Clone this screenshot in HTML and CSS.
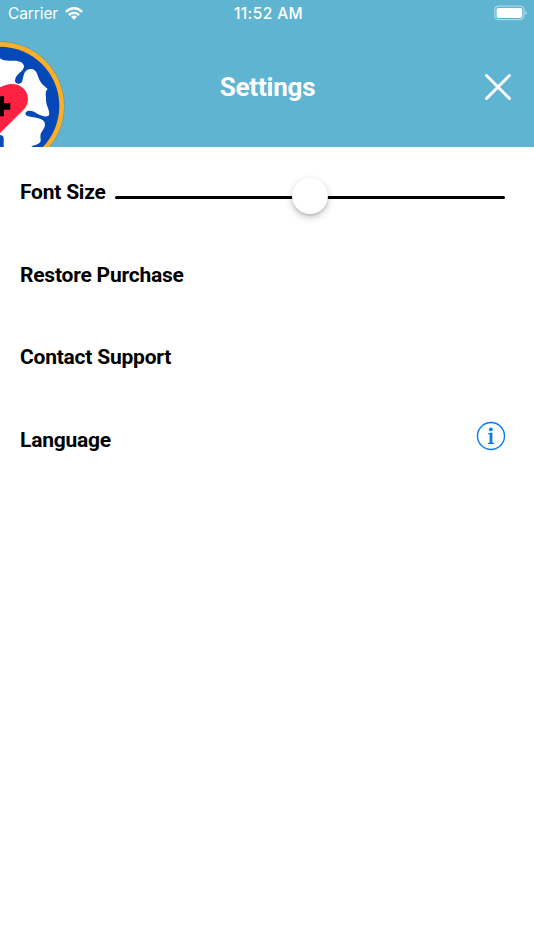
FILE: index.html
```html
<!DOCTYPE html>
<html lang="en">
<head>
<meta charset="utf-8">
<title>Settings</title>
<link rel="stylesheet" href="styles.css">
</head>
<body>
<header class="header">
  <div class="status">
    <div class="carrier"><span>Carrier</span>
      <svg class="wifi" viewBox="0 0 18 13" width="18" height="13"><g fill="none" stroke="#fff" stroke-width="2.5"><path d="M.9 4.9Q9-2.3 17.1 4.9"/><path d="M3.9 8Q9 3.5 14.1 8"/></g><path fill="#fff" d="M6 9.7Q9 7.4 12 9.7L9 12.8Z"/></svg>
    </div>
    <time class="clock">11:52 AM</time>
    <svg class="battery" viewBox="0 0 34 16" width="34" height="16"><rect x=".7" y="1.2" width="29.2" height="13.4" rx="3.5" fill="none" stroke="#a9d7e6" stroke-width="1.3"/><rect x="2.6" y="3.1" width="25.6" height="9.8" rx="1.6" fill="#fff"/><path d="M31.3 5.8Q33 6.2 33 7.9T31.3 10Z" fill="#a9d7e6"/></svg>
  </div>
  <nav class="nav">
    <svg class="logo" viewBox="0 0 240 336" width="80" height="112">
      <circle class="logo-shade" cx="0" cy="213" r="194" fill="#777"/>
      <circle cx="0" cy="213" r="192" fill="#fbb024"/>
      <circle cx="0" cy="213" r="178" fill="#0549b9"/>
      <path fill="#fff" d="M0 70C10 79 26 77 42 77C60 77 72 84 72 94C72 110 48 115 45 136C44 148 60 150 66 140C72 128 68 104 91 102C110 101 111 118 116 129C122 147 134 153 143 162C132 172 140 187 138 196C138 211 151 229 147 241C141 248 122 242 113 237C101 229 94 226 83 228C73 231 75 242 85 244C104 249 122 248 133 260C140 277 125 286 122 297C119 312 127 318 117 325C108 333 99 329 94 336H11V308Q9 300 0 300Z"/>
      <path fill="#ff2142" d="M0 157C22 145 48 142 68 158C88 174 89 203 72 223L0 294Z"/>
      <path d="M0 184H12V204H31V224H12V244H0Z"/>
    </svg>
    <h1 class="title">Settings</h1>
    <button class="close" aria-label="Close"><svg viewBox="0 0 28 28" width="28" height="28"><path d="M2.5 2.5L25.5 25.5M25.5 2.5L2.5 25.5" fill="none" stroke="#fff" stroke-width="3" stroke-linecap="round"/></svg></button>
  </nav>
</header>
<main class="settings">
  <div class="row"><span>Font Size</span><div class="slider"><div class="thumb"></div></div></div>
  <div class="row">Restore Purchase</div>
  <div class="row">Contact Support</div>
  <div class="row"><span>Language</span>
    <svg class="info" viewBox="0 0 30 30" width="30" height="30"><circle cx="15" cy="15" r="13.5" fill="none" stroke="#087cf5" stroke-width="1.4"/><circle cx="14.8" cy="8.4" r="1.9" fill="#087cf5"/><path fill="#087cf5" d="M12 12.2L16.4 11.6V21.6L18.2 22.2V23H11.8V22.2L13.6 21.6V13.4L12 13Z"/></svg>
  </div>
</main>
</body>
</html>
```
FILE: styles.css
```css
* { box-sizing: border-box; }
body { margin: 0; background: #fff; color: #000; font-family: Roboto, sans-serif; }
.header { height: 147px; background: #5fb4d2; color: #fff; overflow: hidden; }
.status { height: 28px; padding: 0 6px 0 8px; display: grid; grid-template-columns: 1fr auto 1fr; align-items: center; font: 400 15.5px/28px Inter, sans-serif; }
.carrier { display: flex; align-items: center; gap: 7px; letter-spacing: -0.1px; }
.wifi { margin-top: -2px; }
.clock { padding-left: 1px; font-weight: 500; letter-spacing: 0.4px; }
.battery { justify-self: end; margin-top: -2px; }
.nav { height: 119px; display: grid; grid-template-columns: 80px 1fr 80px; }
.logo { display: block; align-self: end; }
.logo-shade { opacity: 0.5; }
.title { margin: 0; padding-left: 1px; text-align: center; font-size: 26px; font-weight: 700; line-height: 118px; letter-spacing: -0.2px; }
.close { align-self: center; justify-self: end; width: 28px; height: 28px; margin: 0 22px 1px 0; padding: 0; border: 0; background: none; }
.close svg { display: block; }
.settings { padding: 4px 29px 0 20px; }
.row { height: 82.6px; display: flex; align-items: center; font-size: 21px; font-weight: 700; letter-spacing: -0.22px; }
.slider { flex: 1; height: 3px; margin: 11px 0 0 9px; border-radius: 2px; background: #000; display: flex; align-items: center; justify-content: center; }
.thumb { width: 36px; height: 36px; margin-top: -3px; flex: none; border-radius: 50%; background: #fff; box-shadow: 0 3px 7px rgba(0, 0, 0, .24), 0 2px 1px rgba(0, 0, 0, .08); }
.info { margin: -8px -1px 0 auto; }
```
